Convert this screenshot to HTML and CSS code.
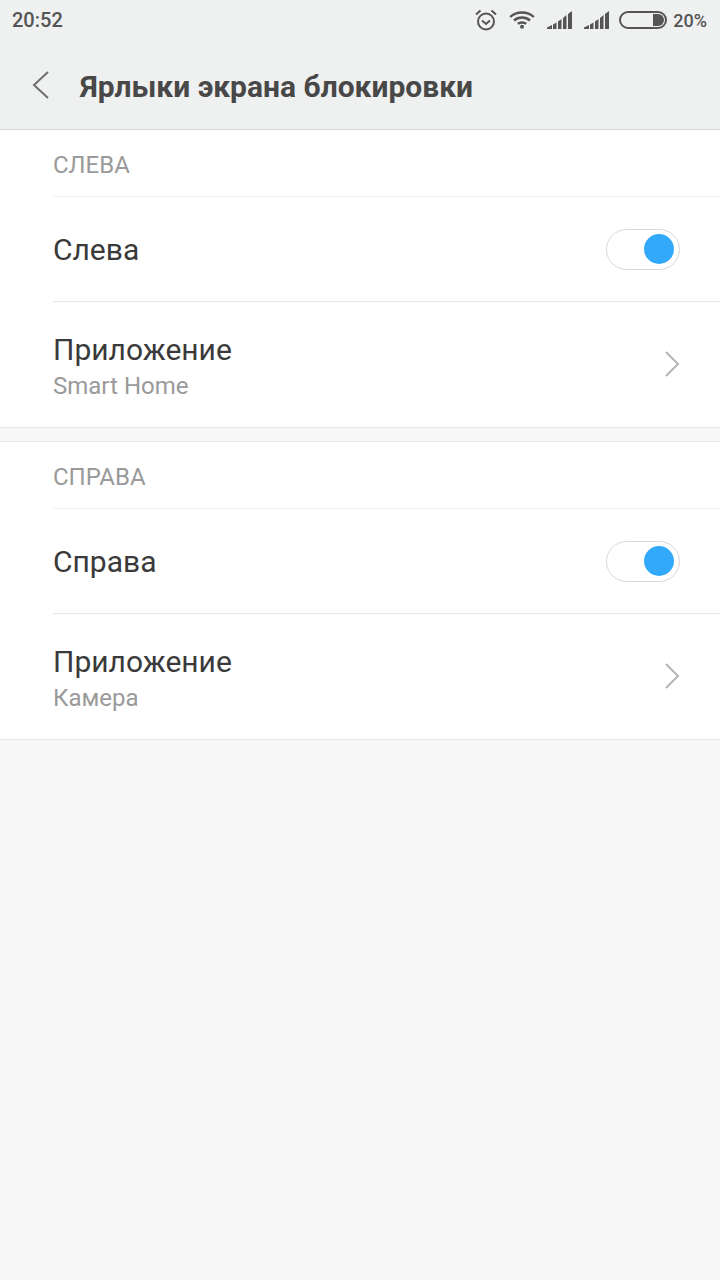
FILE: index.html
```html
<!DOCTYPE html>
<html lang="ru">
<head>
    <meta charset="UTF-8">
    <meta name="viewport" content="width=device-width, initial-scale=1.0">
    <title>Ярлыки экрана блокировки</title>
    <link rel="stylesheet" href="styles.css">
</head>
<body>

<div class="top">
    <div class="status">
        <span class="time">20:52</span>
        <div class="status-icons">
            <svg class="ic-alarm" width="22" height="22" viewBox="0 0 22 22" fill="none" stroke="#555" stroke-width="2">
                <circle cx="11" cy="12.5" r="8"/>
                <path d="M7 11.5l4 3.5 4-3.5"/>
                <path d="M1 5.5L5.5 1.5M21 5.5L16.5 1.5"/>
            </svg>
            <svg class="ic-wifi" width="26" height="18" viewBox="0 0 26 18" fill="none" stroke="#555" stroke-width="2.4">
                <path d="M1.2 6C7.5 0 18.5 0 24.8 6"/>
                <path d="M5 9.5C9.5 5.5 16.5 5.5 21 9.5"/>
                <path d="M8.8 12.8C11 11 15 11 17.2 12.8"/>
                <circle cx="13" cy="15.8" r="2" fill="#555" stroke="none"/>
            </svg>
            <svg class="ic-signal" width="26" height="18" viewBox="0 0 26 18" fill="#555">
                <path d="M0 18v-1.5L5 14v4z"/>
                <path d="M6 18v-4.5l3.500-2V18z"/>
                <path d="M11 18v-7.500l3.500-2.500V18z"/>
                <path d="M16 18V7l3.500-3V18z"/>
                <path d="M21 18V3l4-3V18z"/>
            </svg>
            <svg class="ic-signal" width="26" height="18" viewBox="0 0 26 18" fill="#555">
                <path d="M0 18v-1.5L5 14v4z"/>
                <path d="M6 18v-4.5l3.500-2V18z"/>
                <path d="M11 18v-7.500l3.500-2.500V18z"/>
                <path d="M16 18V7l3.500-3V18z"/>
                <path d="M21 18V3l4-3V18z"/>
            </svg>
            <div class="battery"><div class="battery-fill"></div></div>
            <span class="percent">20%</span>
        </div>
    </div>
    <div class="title-bar">
        <svg class="back" width="18" height="28" viewBox="0 0 18 28" fill="none" stroke="#6e6e6e" stroke-width="2">
            <path d="M16 1L2 14l14 13"/>
        </svg>
        <h1>Ярлыки экрана блокировки</h1>
    </div>
</div>

<section class="group">
    <div class="group-label">СЛЕВА</div>
    <div class="row row-switch">
        <span class="row-name">Слева</span>
        <div class="switch"><div class="knob"></div></div>
    </div>
    <div class="row row-link">
        <div class="row-text">
            <div class="row-name">Приложение</div>
            <div class="row-value">Smart Home</div>
        </div>
        <svg class="arrow" width="16" height="26" viewBox="0 0 16 26" fill="none" stroke="#b5b5b5" stroke-width="2">
            <path d="M2 1l12 12L2 25"/>
        </svg>
    </div>
</section>

<div class="gap"></div>

<section class="group">
    <div class="group-label">СПРАВА</div>
    <div class="row row-switch">
        <span class="row-name">Справа</span>
        <div class="switch"><div class="knob"></div></div>
    </div>
    <div class="row row-link">
        <div class="row-text">
            <div class="row-name">Приложение</div>
            <div class="row-value">Камера</div>
        </div>
        <svg class="arrow" width="16" height="26" viewBox="0 0 16 26" fill="none" stroke="#b5b5b5" stroke-width="2">
            <path d="M2 1l12 12L2 25"/>
        </svg>
    </div>
</section>

</body>
</html>
```

FILE: styles.css
```css
* { margin: 0; padding: 0; box-sizing: border-box; }
body { background: #f7f7f7; font-family: Roboto, "Noto Sans", sans-serif; width: 720px; height: 1280px; overflow: hidden; }

.top { background: #eff0f0; height: 130px; border-bottom: 1px solid #d4d4d4; }

.status { height: 40px; display: flex; justify-content: space-between; align-items: center; padding: 0 12px; color: #555; font-weight: 500; }
.time { font-size: 20px; }
.percent { font-size: 18px; margin-right: 1px; }
.status-icons { display: flex; align-items: center; }
.ic-alarm { margin-right: 12px; }
.ic-wifi { margin-right: 12px; }
.ic-signal { margin-right: 11px; }
.ic-signal + .ic-signal { margin-right: 9px; }
.battery { width: 48px; height: 18px; border: 2px solid #555; border-radius: 9px; padding: 1px; display: flex; justify-content: flex-end; margin-right: 6px; }
.battery-fill { width: 11px; background: #555; border-radius: 0 7px 7px 0; }

.title-bar { height: 89px; display: flex; align-items: center; padding: 0 0 0 32px; }
.back { margin-right: 30px; }
h1 { font-size: 30px; font-weight: 700; color: #484848; margin-top: 4px; }

.group { background: #fff; border-bottom: 1px solid #e8e8e8; }
.group-label { height: 67px; margin-left: 53px; padding-top: 21px; font-size: 24px; color: #9a9a9a; border-bottom: 1px solid #f0f0f0; line-height: 28px; }

.row { margin-left: 53px; padding-right: 40px; display: flex; justify-content: space-between; align-items: center; }
.row-switch { height: 105px; border-bottom: 1px solid #e6e6e6; }
.row-link { height: 125px; padding-bottom: 1px; }
.row-text { padding-top: 8px; }
.row-name { font-size: 30px; color: #3a3a3a; line-height: 36px; }
.row-switch .row-name { padding-top: 2px; }
.row-value { font-size: 24px; color: #9a9a9a; line-height: 36px; }

.switch { width: 74px; height: 41px; border: 1px solid #d9d9d9; border-radius: 21px; background: #fff; display: flex; align-items: center; justify-content: flex-end; padding-right: 5px; }
.knob { width: 30px; height: 30px; border-radius: 50%; background: #33a9fb; }

.gap { height: 14px; border-bottom: 1px solid #e8e8e8; }
```
